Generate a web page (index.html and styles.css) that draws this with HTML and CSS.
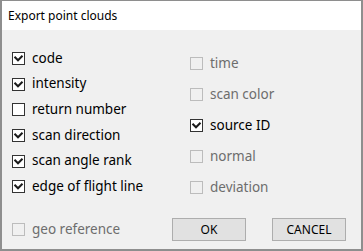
FILE: index.html
```html
<!DOCTYPE html>
<html>
<head>
<meta charset="utf-8">
<link rel="stylesheet" href="styles.css">
</head>
<body>
<div class="dialog">
  <div class="titlebar">Export point clouds</div>
  <div class="content">
    <div class="columns">
      <div class="col col-left">
        <label class="opt"><span class="box checked"><svg viewBox="0 0 11 11"><path d="M1.5 3.8 L5 7.3 L9.5 2.8"/></svg></span><span class="lbl">code</span></label>
        <label class="opt"><span class="box checked"><svg viewBox="0 0 11 11"><path d="M1.5 3.8 L5 7.3 L9.5 2.8"/></svg></span><span class="lbl">intensity</span></label>
        <label class="opt"><span class="box"></span><span class="lbl">return number</span></label>
        <label class="opt"><span class="box checked"><svg viewBox="0 0 11 11"><path d="M1.5 3.8 L5 7.3 L9.5 2.8"/></svg></span><span class="lbl">scan direction</span></label>
        <label class="opt"><span class="box checked"><svg viewBox="0 0 11 11"><path d="M1.5 3.8 L5 7.3 L9.5 2.8"/></svg></span><span class="lbl">scan angle rank</span></label>
        <label class="opt"><span class="box checked"><svg viewBox="0 0 11 11"><path d="M1.5 3.8 L5 7.3 L9.5 2.8"/></svg></span><span class="lbl">edge of flight line</span></label>
      </div>
      <div class="col col-right">
        <label class="opt disabled"><span class="box"></span><span class="lbl">time</span></label>
        <label class="opt disabled"><span class="box"></span><span class="lbl">scan color</span></label>
        <label class="opt"><span class="box checked"><svg viewBox="0 0 11 11"><path d="M1.5 3.8 L5 7.3 L9.5 2.8"/></svg></span><span class="lbl">source ID</span></label>
        <label class="opt disabled"><span class="box"></span><span class="lbl">normal</span></label>
        <label class="opt disabled"><span class="box"></span><span class="lbl">deviation</span></label>
      </div>
    </div>
    <div class="footer">
      <label class="opt disabled geo"><span class="box"></span><span class="lbl">geo reference</span></label>
      <div class="buttons">
        <button class="btn">OK</button>
        <button class="btn">CANCEL</button>
      </div>
    </div>
  </div>
</div>
</body>
</html>
```

FILE: styles.css
```css
* { box-sizing: border-box; }
html, body { margin: 0; padding: 0; background: #fff; }
body { font-family: "Noto Sans", "Open Sans", sans-serif; font-size: 12px; color: #000; }
.dialog {
  width: 363px;
  height: 251px;
  border-style: solid;
  border-color: #8e8e8e;
  border-width: 1px 2px 2px 2px;
  background: #f0f0f0;
  display: flex;
  flex-direction: column;
}
.titlebar {
  height: 29px;
  background: #fff;
  padding-left: 6px;
  line-height: 29px;
  font-size: 12px;
  flex: none;
}
.content {
  flex: 1;
  display: flex;
  flex-direction: column;
  padding: 16px 0 0 10px;
}
.columns { display: flex; align-items: flex-start; }
.col { display: flex; flex-direction: column; }
.col-left { width: 178px; }
.col-right { margin-top: 2px; }
.col-right .opt { height: 31px; }
.opt {
  display: flex;
  align-items: center;
  height: 25.6px;
  gap: 7px;
  white-space: nowrap;
}
.box {
  width: 13px;
  height: 13px;
  border: 1px solid #333;
  background: #fff;
  flex: none;
  display: flex;
}
.box svg { width: 11px; height: 11px; }
.box svg path { fill: none; stroke: #1a1a1a; stroke-width: 2; }
.disabled .box { border-color: #bcbcbc; background: #f0f0f0; }
.disabled .lbl { color: #6d6d6d; }
.lbl { position: relative; top: -1px; font-size: 13.5px; letter-spacing: 0; }
.footer {
  margin-top: 15px;
  display: flex;
  align-items: center;
}
.footer .opt { height: 23px; }
.geo { width: 160px; }
.buttons { display: flex; gap: 26px; }
.btn {
  width: 74px;
  height: 23px;
  border: 1px solid #adadad;
  background: #e1e1e1;
  font-family: "Noto Sans", "Open Sans", sans-serif;
  font-size: 12px;
  color: #000;
  padding: 0;
}
```
